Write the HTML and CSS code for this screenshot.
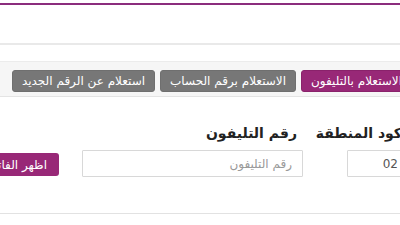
FILE: index.html
```html
<!DOCTYPE html>
<html lang="ar">
<head>
<meta charset="utf-8">
<title>استعلام الفاتورة</title>
<link rel="stylesheet" href="styles.css">
</head>
<body>
<div class="page" dir="rtl">
  <header class="header"></header>
  <nav class="tabs-panel">
    <div class="tabs">
      <button class="tab tab-active">الاستعلام بالتليفون</button>
      <button class="tab">الاستعلام برقم الحساب</button>
      <button class="tab">استعلام عن الرقم الجديد</button>
    </div>
  </nav>
  <section class="form">
    <div class="form-grid">
      <label class="label label-area cell-area" for="area">كود المنطقة</label>
      <label class="label cell-phone" for="phone">رقم التليفون</label>
      <span class="cell-btn"></span>
      <div class="cell-area"><input id="area" class="input input-area" type="text" value="02"></div>
      <div class="cell-phone"><input id="phone" class="input input-phone" type="text" placeholder="رقم التليفون"></div>
      <div class="cell-btn"><button class="show-btn">اظهر الفاتورة</button></div>
    </div>
  </section>
</div>
</body>
</html>
```
FILE: styles.css
```css
html, body {
  margin: 0;
  padding: 0;
  background: #ffffff;
  overflow: hidden;
}
body {
  width: 400px;
  height: 225px;
  font-family: "DejaVu Sans", sans-serif;
}
.page {
  width: 520px;
  margin-left: -60px;
  padding-top: 3px;
}
.header {
  height: 38px;
  border-top: 2px solid #8b2d7d;
  border-bottom: 2px solid #e9e9e9;
  margin-bottom: 16px;
}
.tabs-panel {
  background: #f6f6f6;
  border-top: 1px solid #ececec;
  border-bottom: 1px solid #e4e4e4;
  padding: 8px 48px 4px 0;
}
.tabs {
  display: flex;
  gap: 5px;
}
.tab {
  height: 22px;
  padding: 0 9px;
  border: 1px solid #6f6f6f;
  border-radius: 3px;
  background: #777777;
  color: #ffffff;
  font-family: "DejaVu Sans", sans-serif;
  font-size: 12px;
  line-height: 20px;
  white-space: nowrap;
}
.tab-active {
  background: #982877;
  border-color: #8a226b;
}
.form {
  padding: 26px 51px 0 0;
  height: 90px;
  border-bottom: 1px solid #e2e2e2;
}
.form-grid {
  display: grid;
  grid-template-columns: 106px 244px auto;
  align-items: center;
  row-gap: 7px;
}
.cell-area { padding-left: 13px; }
.cell-phone { padding-left: 23px; }
.label {
  font-weight: bold;
  font-size: 14px;
  line-height: 20px;
  color: #222222;
  padding-right: 6px;
  white-space: nowrap;
}
.label-area {
  padding-right: 7px;
}
.input {
  display: block;
  box-sizing: border-box;
  height: 27px;
  border: 1px solid #d8d8d8;
  border-radius: 1px;
  padding: 0 10px;
  font-family: "DejaVu Sans", sans-serif;
  font-size: 12px;
  color: #555555;
  background: #ffffff;
}
.input::placeholder { color: #9a9a9a; }
.input-area { width: 62px; }
.input-phone { width: 221px; }
.show-btn {
  display: block;
  height: 23px;
  margin-top: 2px;
  padding: 0 12px;
  border: none;
  border-radius: 3px;
  background: #982877;
  color: #ffffff;
  font-family: "DejaVu Sans", sans-serif;
  font-size: 12px;
  white-space: nowrap;
}
```
